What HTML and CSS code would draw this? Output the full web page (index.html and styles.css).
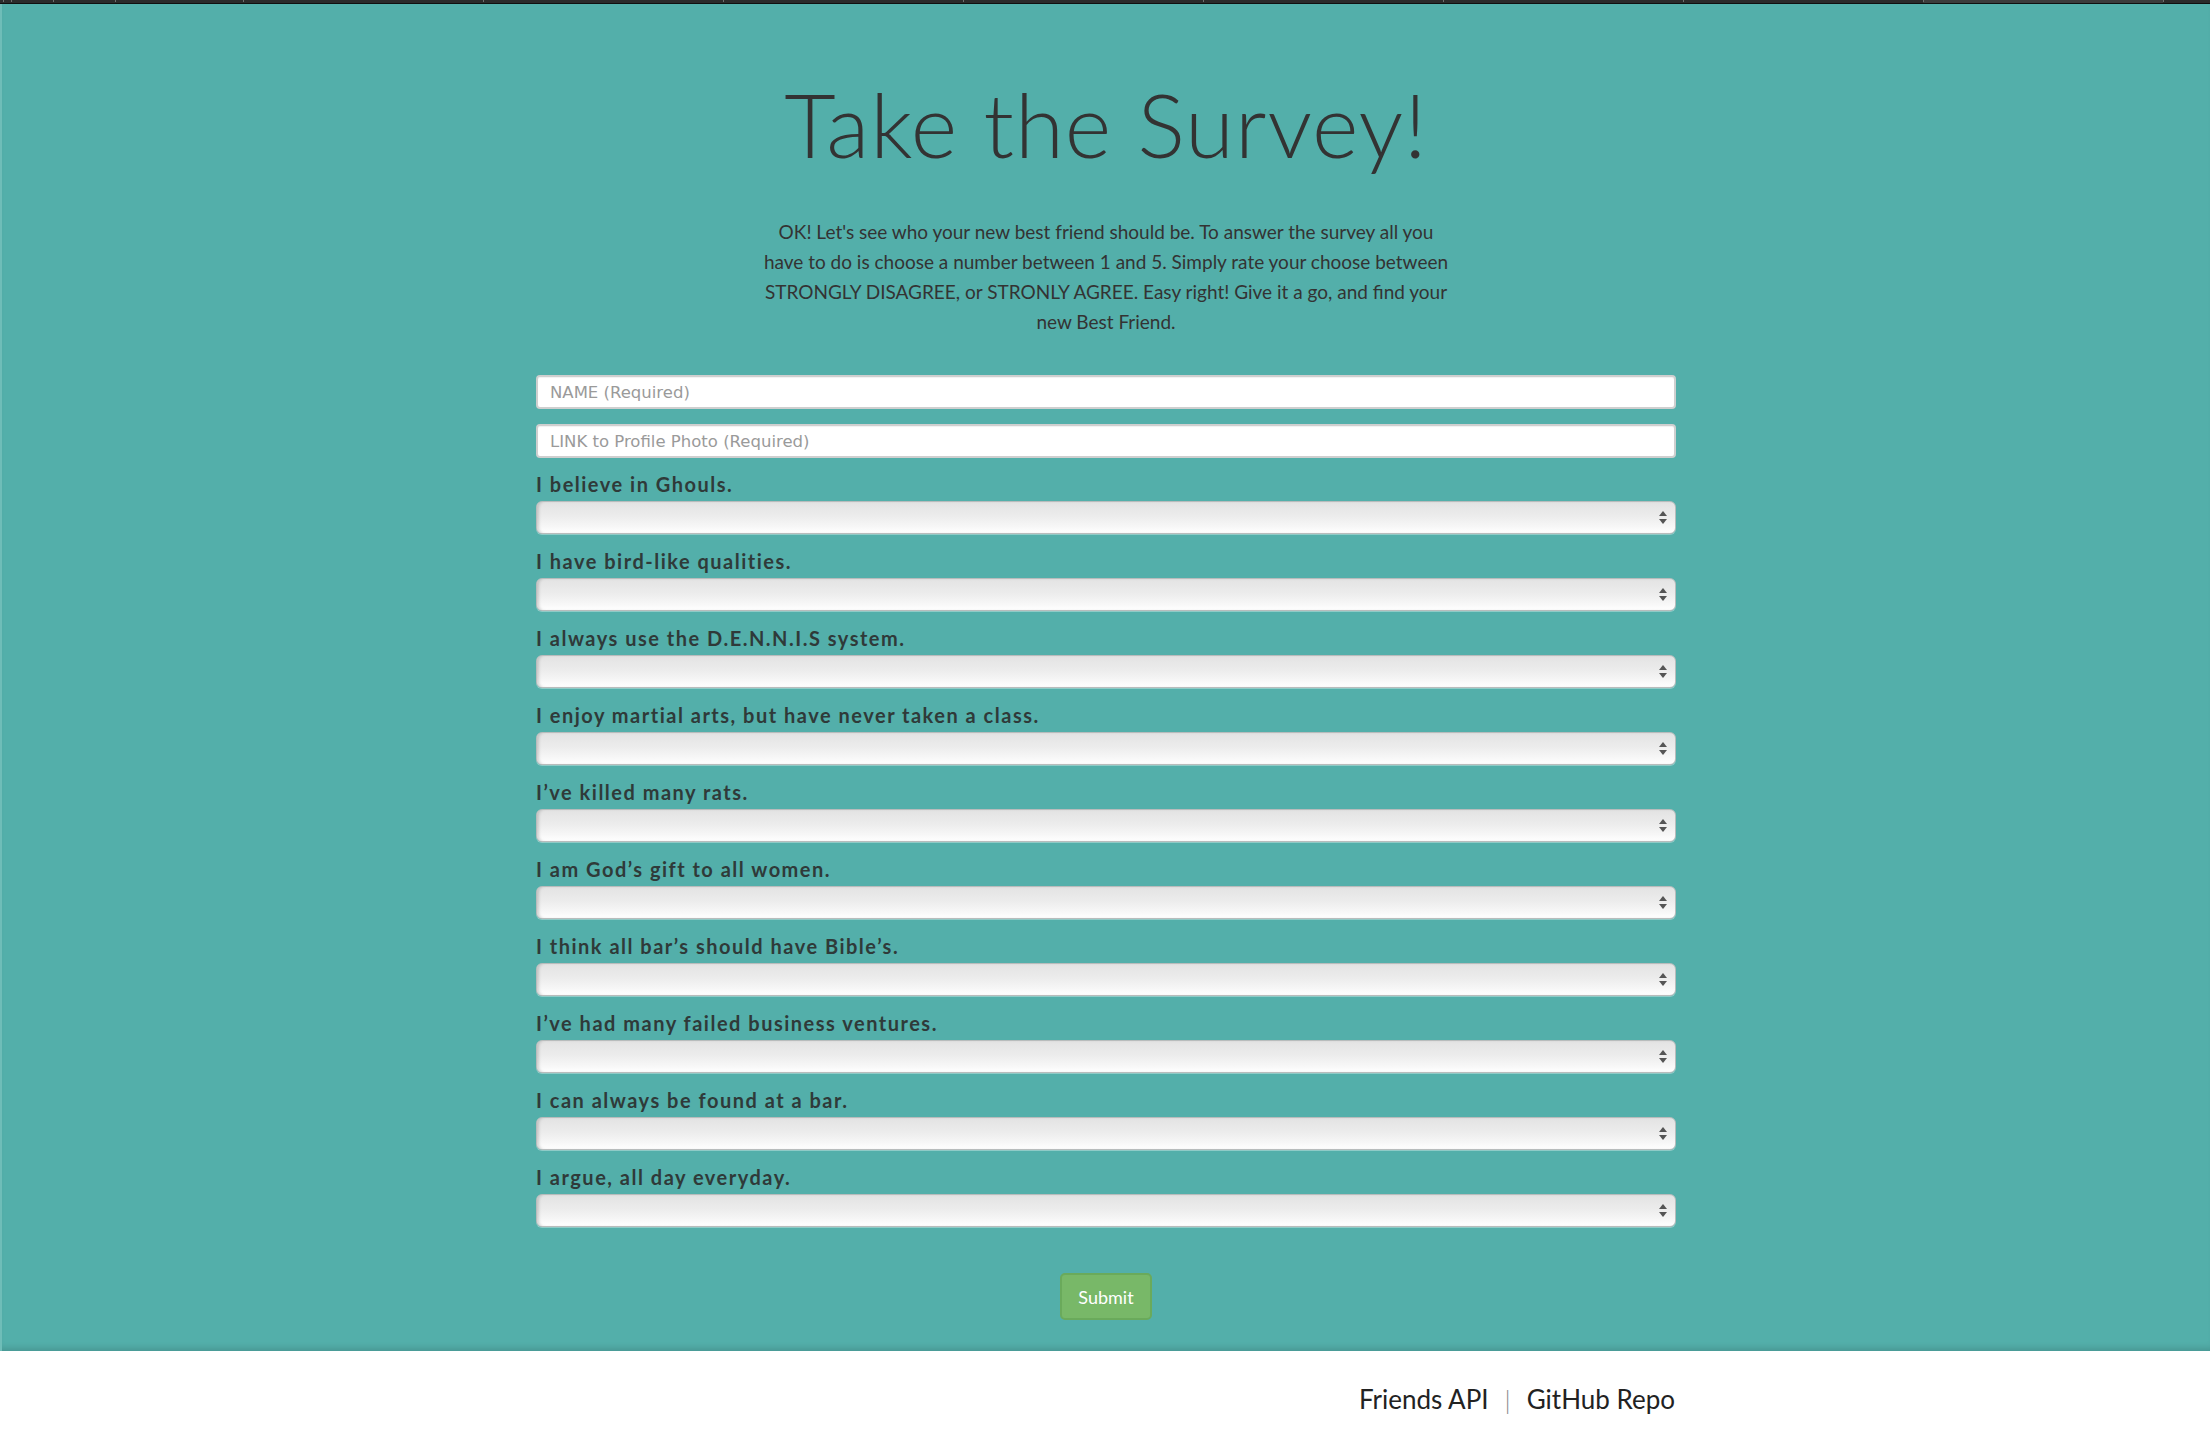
FILE: index.html
```html
<!DOCTYPE html>
<html lang="en">
<head>
<meta charset="utf-8">
<title>Friend Finder - Survey</title>
<link rel="stylesheet" href="styles.css">
</head>
<body>
<div class="topbar"></div>
<main class="survey">
  <div class="container">
    <h1 class="title">Take the Survey!</h1>
    <p class="intro">OK! Let's see who your new best friend should be. To answer the survey all you have to do is choose a number between 1 and 5. Simply rate your choose between STRONGLY DISAGREE, or STRONLY AGREE. Easy right! Give it a go, and find your new Best Friend.</p>
    <form class="form">
      <input class="field" type="text" placeholder="NAME (Required)">
      <input class="field" type="text" placeholder="LINK to Profile Photo (Required)">
      <div class="question"><label class="qlabel">I believe in Ghouls.</label><div class="select-wrap"><select class="select"><option></option><option>1 (Strongly Disagree)</option><option>2</option><option>3</option><option>4</option><option>5 (Strongly Agree)</option></select></div></div>
      <div class="question"><label class="qlabel">I have bird-like qualities.</label><div class="select-wrap"><select class="select"><option></option><option>1 (Strongly Disagree)</option><option>2</option><option>3</option><option>4</option><option>5 (Strongly Agree)</option></select></div></div>
      <div class="question"><label class="qlabel">I always use the D.E.N.N.I.S system.</label><div class="select-wrap"><select class="select"><option></option><option>1 (Strongly Disagree)</option><option>2</option><option>3</option><option>4</option><option>5 (Strongly Agree)</option></select></div></div>
      <div class="question"><label class="qlabel">I enjoy martial arts, but have never taken a class.</label><div class="select-wrap"><select class="select"><option></option><option>1 (Strongly Disagree)</option><option>2</option><option>3</option><option>4</option><option>5 (Strongly Agree)</option></select></div></div>
      <div class="question"><label class="qlabel">I’ve killed many rats.</label><div class="select-wrap"><select class="select"><option></option><option>1 (Strongly Disagree)</option><option>2</option><option>3</option><option>4</option><option>5 (Strongly Agree)</option></select></div></div>
      <div class="question"><label class="qlabel">I am God’s gift to all women.</label><div class="select-wrap"><select class="select"><option></option><option>1 (Strongly Disagree)</option><option>2</option><option>3</option><option>4</option><option>5 (Strongly Agree)</option></select></div></div>
      <div class="question"><label class="qlabel">I think all bar’s should have Bible’s.</label><div class="select-wrap"><select class="select"><option></option><option>1 (Strongly Disagree)</option><option>2</option><option>3</option><option>4</option><option>5 (Strongly Agree)</option></select></div></div>
      <div class="question"><label class="qlabel">I’ve had many failed business ventures.</label><div class="select-wrap"><select class="select"><option></option><option>1 (Strongly Disagree)</option><option>2</option><option>3</option><option>4</option><option>5 (Strongly Agree)</option></select></div></div>
      <div class="question"><label class="qlabel">I can always be found at a bar.</label><div class="select-wrap"><select class="select"><option></option><option>1 (Strongly Disagree)</option><option>2</option><option>3</option><option>4</option><option>5 (Strongly Agree)</option></select></div></div>
      <div class="question"><label class="qlabel">I argue, all day everyday.</label><div class="select-wrap"><select class="select"><option></option><option>1 (Strongly Disagree)</option><option>2</option><option>3</option><option>4</option><option>5 (Strongly Agree)</option></select></div></div>
      <div class="actions"><button class="submit" type="button">Submit</button></div>
    </form>
  </div>
</main>
<footer class="footer">
  <div class="container footer-inner">
    <a class="flink" href="#">Friends API</a><span class="sep">|</span><a class="flink" href="#">GitHub Repo</a>
  </div>
</footer>
</body>
</html>
```
FILE: styles.css
```css
* { box-sizing: border-box; }

html, body {
  margin: 0;
  padding: 0;
  background: #ffffff;
  font-family: Lato, "Noto Sans", sans-serif;
  color: #333333;
}

.topbar {
  height: 4px;
  background:
    linear-gradient(#6e6e6e, #6e6e6e) 11px 0 / 1px 2px no-repeat,
    linear-gradient(#6e6e6e, #6e6e6e) 53px 0 / 1px 2px no-repeat,
    linear-gradient(#6e6e6e, #6e6e6e) 115px 0 / 1px 2px no-repeat,
    linear-gradient(to right, #6e6e6e 0 1px, transparent 1px) 3px 0 / 240px 2px repeat-x,
    linear-gradient(#3c3c3c, #3c3c3c) 1923px 0 / 240px 3px no-repeat,
    linear-gradient(#2b2b2b 0 3px, #101010 3px 4px);
}

.survey {
  background: #53afaa;
  border-left: 2px solid #6fbdb8;
  box-shadow: inset 0 -7px 6px -4px rgba(0, 0, 0, 0.14);
  padding: 1px 0 31px;
}

.container {
  width: 1140px;
  margin: 0 auto;
}

.title {
  margin: 64px 0 0;
  text-align: center;
  font-family: Lato, "Noto Sans", sans-serif;
  font-weight: 300;
  font-size: 89px;
  line-height: 110px;
  color: #333333;
  letter-spacing: 1px;
}

.intro {
  width: 688px;
  margin: 38px auto 0;
  text-align: center;
  font-size: 19px;
  line-height: 30px;
  color: #333333;
}

.form {
  display: flex;
  flex-direction: column;
  margin-top: 38px;
}

.field {
  height: 34px;
  width: 100%;
  border: 2px solid #cfcfcf;
  border-radius: 4px;
  background: #ffffff;
  padding: 0 12px;
  font-family: "DejaVu Sans", sans-serif;
  font-size: 16.5px;
  color: #555;
  margin-bottom: 15px;
  box-shadow: inset 0 1px 1px rgba(0, 0, 0, 0.06);
}

.field::placeholder {
  color: #9a9a9a;
}

.question {
  display: flex;
  flex-direction: column;
  margin-bottom: 16px;
}

.qlabel {
  font-family: Lato, "Noto Sans", sans-serif;
  font-weight: 700;
  font-size: 20px;
  line-height: 23px;
  letter-spacing: 1.5px;
  color: #2f3a39;
  margin-bottom: 5px;
}

.select-wrap {
  position: relative;
  height: 33px;
}

.select {
  appearance: none;
  -webkit-appearance: none;
  width: 100%;
  height: 33px;
  border: 1px solid #b8bcbc;
  border-radius: 6px;
  background: linear-gradient(#e3e3e3 0%, #ececec 45%, #f7f7f7 80%, #ffffff 100%);
  box-shadow: inset 3px 0 3px -1px rgba(0, 0, 0, 0.16), 0 1px 0 rgba(255, 255, 255, 0.35);
  font-family: "DejaVu Sans", sans-serif;
  font-size: 14px;
  color: #333;
  padding: 0 30px 0 12px;
}

.select-wrap::before,
.select-wrap::after {
  content: "";
  position: absolute;
  right: 9px;
  width: 0;
  height: 0;
  border-left: 4px solid transparent;
  border-right: 4px solid transparent;
  pointer-events: none;
}

.select-wrap::before {
  top: 10px;
  border-bottom: 5px solid #555;
}

.select-wrap::after {
  top: 18px;
  border-top: 5px solid #555;
}

.actions {
  display: flex;
  justify-content: center;
  margin-top: 30px;
}

.submit {
  width: 92px;
  height: 47px;
  background: #78b868;
  border: 2px solid #6aaa5b;
  border-radius: 5px;
  color: #ffffff;
  font-family: Lato, "Noto Sans", sans-serif;
  font-size: 18px;
  padding: 0;
}

.footer {
  background: #ffffff;
  padding: 33px 0 40px;
}

.footer-inner {
  display: flex;
  justify-content: flex-end;
  align-items: center;
  font-size: 26px;
  line-height: 30px;
}

.flink {
  color: #222222;
  text-decoration: none;
}

.sep {
  color: #8a8a8a;
  margin: 0 16px;
  font-weight: 300;
}
```
